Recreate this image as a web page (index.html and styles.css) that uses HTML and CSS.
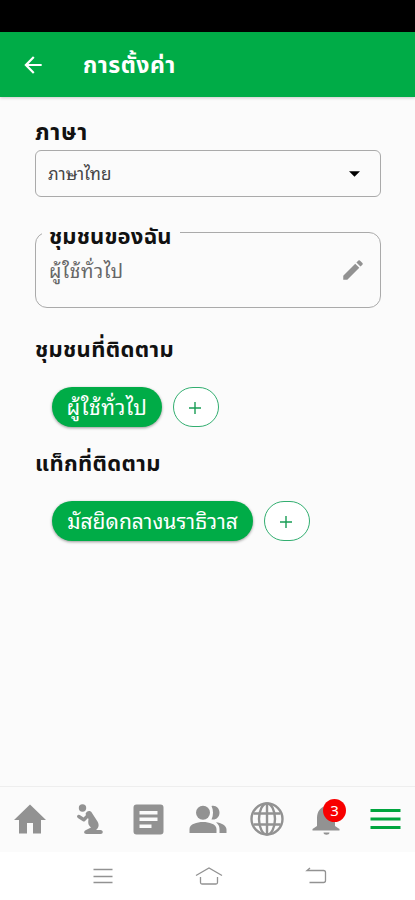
FILE: index.html
```html
<!DOCTYPE html>
<html lang="th">
<head>
<meta charset="utf-8">
<title>การตั้งค่า</title>
<link rel="stylesheet" href="styles.css">
</head>
<body>
<div class="status-bar"></div>
<header class="app-bar">
  <svg class="back" viewBox="0 0 24 24"><path d="M20 11H7.830l5.590-5.590L12 4l-8 8 8 8 1.410-1.410L7.830 13H20v-2z"/></svg>
  <h1 class="title">การตั้งค่า</h1>
</header>
<main class="content">
  <h2 class="heading language-heading">ภาษา</h2>
  <div class="select">
    <span class="value language-value">ภาษาไทย</span>
    <svg class="caret" viewBox="0 0 12 6"><path d="M0 0h12L6 6z"/></svg>
  </div>
  <fieldset class="community">
    <legend class="heading community-heading">ชุมชนของฉัน</legend>
    <span class="value community-value">ผู้ใช้ทั่วไป</span>
    <svg class="pencil" viewBox="0 0 24 24"><path d="M3 17.250V21h3.750L17.810 9.940l-3.750-3.750L3 17.250zM20.710 7.040a1 1 0 0 0 0-1.410l-2.340-2.340a1 1 0 0 0-1.410 0l-1.830 1.830 3.750 3.750 1.830-1.830z"/></svg>
  </fieldset>
  <h2 class="heading follow-heading">ชุมชนที่ติดตาม</h2>
  <div class="chips">
    <span class="chip chip-community"><span>ผู้ใช้ทั่วไป</span></span>
    <button class="add"><svg viewBox="0 0 12 12"><path d="M6 0v12M0 6h12"/></svg></button>
  </div>
  <h2 class="heading tag-heading">แท็กที่ติดตาม</h2>
  <div class="chips">
    <span class="chip chip-tag"><span>มัสยิดกลางนราธิวาส</span></span>
    <button class="add"><svg viewBox="0 0 12 12"><path d="M6 0v12M0 6h12"/></svg></button>
  </div>
</main>
<nav class="tabs">
  <svg class="tab" viewBox="0 0 36 36"><path d="M18 2.500 2 18h5v13.500h8V21h6v10.500h8V18h5z"/></svg>
  <svg class="tab" viewBox="0 0 36 36"><circle cx="11.500" cy="6" r="3.700"/><path class="limb" d="M7.800 14.500l5 3.200 4-4"/><path d="M14.500 12c1-3.500 5-4 6.500-1l5.500 8.500c2 3.500 1.200 6.500-1.500 8.500h4.500c3 0 3 4 0 4H15.500c-3 0-3-3-.5-4l5-2.500c-3-2.500-3-5-2.500-8.500z"/></svg>
  <svg class="tab" viewBox="0 0 36 36"><path fill-rule="evenodd" d="M6.500 2.500h24a3 3 0 0 1 3 3v24a3 3 0 0 1-3 3h-24a3 3 0 0 1-3-3v-24a3 3 0 0 1 3-3zm3 6.500v3.500h18V9zm0 6.500V19h18v-3.500zm0 7V26h12v-3.500z"/></svg>
  <svg class="tab people" viewBox="0 0 40 36"><circle cx="15" cy="10.700" r="7"/><path d="M1.500 31v-4C1.500 22 9 20 15 20s13.500 2 13.500 7v4zM23.500 4c4.500-1 8 2.500 8 6.700s-3.500 7.700-8 6.700c2-4 2-9.400 0-13.400zM28 20.200c5 .8 10.500 3 10.500 7.300V31h-7v-4c0-3-1.300-5-3.500-6.800z"/></svg>
  <svg class="tab globe" viewBox="0 0 36 36"><circle cx="18" cy="17" r="15.500"/><ellipse cx="18" cy="17" rx="8" ry="15.500"/><path d="M4.500 11.500h27M4.500 22.500h27M18 1.500v31"/></svg>
  <span class="alerts">
    <svg class="tab" viewBox="0 0 36 36"><path d="M18 4c-6 1-9 6-9 12v8l-4.500 3v1.500h27V27L27 24v-8c0-6-3-11-9-12zM15.500 30.500h6c0 3-6 3-6 0z"/></svg>
    <span class="badge">3</span>
  </span>
  <svg class="tab menu" viewBox="0 0 36 36"><path d="M3.500 8.500h30M3.500 17h30M3.500 25.500h30"/></svg>
</nav>
<footer class="system-bar">
  <svg viewBox="0 0 28 20"><path d="M4.500 3.500h19M4.500 10.500h19M4.500 16.500h19"/></svg>
  <svg viewBox="0 0 28 20"><path d="M1 9.500 14 2 27 9.500M5.500 11v5.500q0 1.500 1.500 1.500h14q1.500 0 1.500-1.500V11"/></svg>
  <svg viewBox="0 0 28 20"><path d="M9 2 6 4.500h16.500q2 0 2 2v8q0 2-2 2H8.500"/></svg>
</footer>
</body>
</html>
```
FILE: styles.css
```css
* { box-sizing: border-box; }
body {
  margin: 0; width: 415px; height: 900px; overflow: hidden;
  display: flex; flex-direction: column;
  background: #fbfbfb; color: #111;
  font-family: "Noto Sans Thai", "Noto Sans", sans-serif;
}
svg { display: block; flex: none; }
.status-bar { height: 32px; background: #000; flex: none; }
.app-bar {
  height: 65px; flex: none; display: flex; align-items: center;
  padding-left: 20px; background: #00ac47; color: #fff;
  box-shadow: 0 1px 3px #0003;
}
.back { width: 26px; height: 26px; fill: #fff; }
.title { margin: 3px 0 0 37px; font-size: 23px; line-height: 30px; font-weight: 700; letter-spacing: .5px; white-space: nowrap; }
.content { flex: 1; padding: 20px 34px 0 35px; }
.heading { margin: 0; font-size: 22px; line-height: 32px; height: 30px; font-weight: 700; letter-spacing: .35px; white-space: nowrap; }
.language-heading { font-size: 23px; letter-spacing: .7px; }
.select {
  height: 47px; margin-top: 3px; border: 1px solid #aaa; border-radius: 6px;
  display: flex; align-items: center; justify-content: space-between; padding: 0 20px 0 12px;
}
.value { font-family: "Noto Sans Thai Looped", "Loma", "Noto Sans Thai", "Noto Sans", sans-serif; font-size: 17px; color: #444; white-space: nowrap; }
.language-value { margin-top: -2px; }
.caret { width: 11px; height: 6px; fill: #000; }
.community {
  margin: 24px 0 0; height: 87px; padding: 0 14px 0 13px; min-width: 0;
  border: 1px solid #aaa; border-radius: 12px;
  display: flex; justify-content: space-between; align-items: flex-start;
}
.community .community-heading { margin-left: -7px; padding: 0 7px; width: 138px; height: 22px; line-height: 34px; letter-spacing: .15px; }
.community-value { color: #666; font-size: 19px; line-height: 28px; margin-top: 13px; letter-spacing: .7px; }
.pencil { width: 26px; height: 26px; fill: #929292; margin-top: 14px; }
.follow-heading { margin-top: 27px; }
.tag-heading { margin-top: 22px; }
.chips { display: flex; gap: 11px; margin: 22px 0 0 17px; height: 40px; }
.chip {
  border-radius: 20px; background: #00ac47; color: #fff; font-size: 21px;
  font-family: "Noto Sans Thai Looped", "Loma", "Noto Sans Thai", "Noto Sans", sans-serif;
  display: flex; align-items: center; justify-content: center; white-space: nowrap;
  box-shadow: 0 1px 3px #0006;
}
.chip span { letter-spacing: 0; margin-top: -4px; }
.chip-community { width: 110px; }
.chip-community span { letter-spacing: .5px; }
.chip-tag { width: 201px; }
.add {
  width: 46px; height: 40px; border: 1px solid #32ae70; border-radius: 20px;
  background: #fff; padding: 0 2px 0 0; display: flex; align-items: center; justify-content: center;
}
.add svg { width: 12px; height: 12px; fill: none; stroke: #199d55; stroke-width: 1.4; margin-top: 1px; }
.tabs {
  height: 66px; flex: none; border-top: 1px solid #eee;
  display: grid; grid-template-columns: repeat(7, 59.3px); justify-content: center; justify-items: center; align-items: center;
}
.tab { width: 36px; height: 36px; fill: #929292; }
.limb { fill: none; stroke: #929292; stroke-width: 3.5; stroke-linecap: round; stroke-linejoin: round; }
.people { width: 40px; }
.tabs .globe { fill: none; stroke: #929292; stroke-width: 2.4; }
.menu { fill: none; stroke: #00a53e; stroke-width: 3; }
.alerts { position: relative; }
.badge {
  position: absolute; left: 15px; top: -3px; width: 23px; height: 23px; border-radius: 50%;
  background: #f80000; color: #fff; font: 15px/23px "Noto Sans", sans-serif; text-align: center;
}
.system-bar {
  height: 48px; flex: none; background: #fff;
  display: flex; justify-content: center; align-items: center; gap: 78px;
}
.system-bar svg { width: 28px; height: 20px; fill: none; stroke: #929292; stroke-width: 1.3; }
.system-bar svg:first-child { margin-left: 3px; }
```
